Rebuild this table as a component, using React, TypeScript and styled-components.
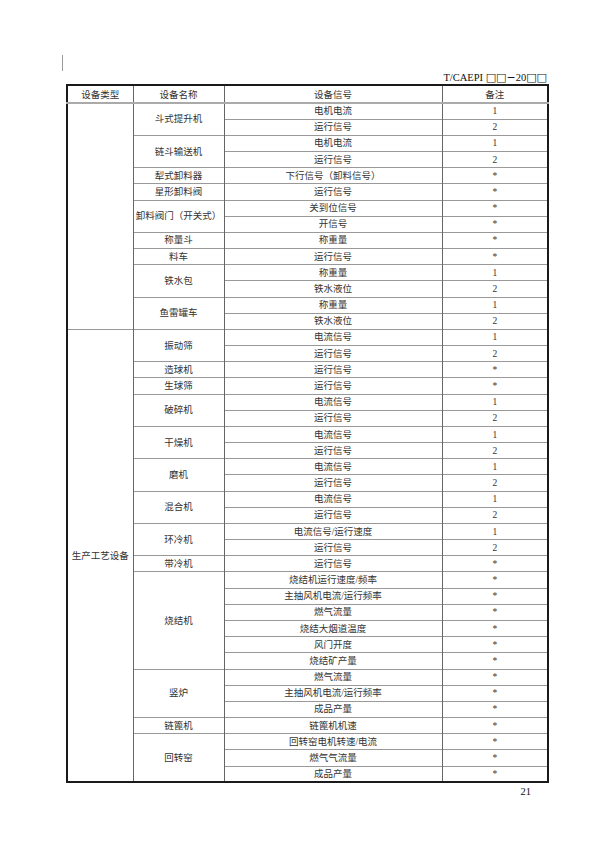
import React from 'react'
import styled, { createGlobalStyle } from 'styled-components';

type Signal = { name: string, note: string }
type Device = { name: string, signals: Signal[] }
type Group = { type: string, devices: Device[] }

const s = (name: string, note: string): Signal => ({ name, note })

const groups: Group[] = [
    {
        type: '',
        devices: [
            { name: '斗式提升机', signals: [s('电机电流', '1'), s('运行信号', '2')] },
            { name: '链斗输送机', signals: [s('电机电流', '1'), s('运行信号', '2')] },
            { name: '犁式卸料器', signals: [s('下行信号（卸料信号）', '*')] },
            { name: '星形卸料阀', signals: [s('运行信号', '*')] },
            { name: '卸料阀门（开关式）', signals: [s('关到位信号', '*'), s('开信号', '*')] },
            { name: '称量斗', signals: [s('称重量', '*')] },
            { name: '料车', signals: [s('运行信号', '*')] },
            { name: '铁水包', signals: [s('称重量', '1'), s('铁水液位', '2')] },
            { name: '鱼雷罐车', signals: [s('称重量', '1'), s('铁水液位', '2')] },
        ]
    },
    {
        type: '生产工艺设备',
        devices: [
            { name: '振动筛', signals: [s('电流信号', '1'), s('运行信号', '2')] },
            { name: '造球机', signals: [s('运行信号', '*')] },
            { name: '生球筛', signals: [s('运行信号', '*')] },
            { name: '破碎机', signals: [s('电流信号', '1'), s('运行信号', '2')] },
            { name: '干燥机', signals: [s('电流信号', '1'), s('运行信号', '2')] },
            { name: '磨机', signals: [s('电流信号', '1'), s('运行信号', '2')] },
            { name: '混合机', signals: [s('电流信号', '1'), s('运行信号', '2')] },
            { name: '环冷机', signals: [s('电流信号/运行速度', '1'), s('运行信号', '2')] },
            { name: '带冷机', signals: [s('运行信号', '*')] },
            {
                name: '烧结机', signals: [
                    s('烧结机运行速度/频率', '*'),
                    s('主抽风机电流/运行频率', '*'),
                    s('燃气流量', '*'),
                    s('烧结大烟道温度', '*'),
                    s('风门开度', '*'),
                    s('烧结矿产量', '*'),
                ]
            },
            { name: '竖炉', signals: [s('燃气流量', '*'), s('主抽风机电流/运行频率', '*'), s('成品产量', '*')] },
            { name: '链篦机', signals: [s('链篦机机速', '*')] },
            { name: '回转窑', signals: [s('回转窑电机转速/电流', '*'), s('燃气气流量', '*'), s('成品产量', '*')] },
        ]
    },
]

const App: React.FC = () => {
    return (
        <Page>
            <GlobalStyle />
            <CropMark />
            <DocCode>T/CAEPI <Glyph>□□−</Glyph>20<Glyph>□□</Glyph></DocCode>
            <Table>
                <colgroup>
                    <col style={{ width: 66 }} />
                    <col style={{ width: 91 }} />
                    <col style={{ width: 218 }} />
                    <col style={{ width: 106 }} />
                </colgroup>
                <thead>
                    <tr>
                        <Th>设备类型</Th>
                        <Th>设备名称</Th>
                        <Th>设备信号</Th>
                        <Th>备注</Th>
                    </tr>
                </thead>
                <tbody>
                    {groups.map((group, gi) => {
                        const groupSpan = group.devices.reduce((n, d) => n + d.signals.length, 0)
                        return group.devices.map((device, di) =>
                            device.signals.map((signal, si) => (
                                <tr key={`${gi}-${di}-${si}`}>
                                    {di === 0 && si === 0 && (
                                        <Td rowSpan={groupSpan}>{group.type}</Td>
                                    )}
                                    {si === 0 && (
                                        <NameCell rowSpan={device.signals.length}>{device.name}</NameCell>
                                    )}
                                    <Td>{signal.name}</Td>
                                    <Td>{signal.note}</Td>
                                </tr>
                            ))
                        )
                    })}
                </tbody>
            </Table>
            <PageNumber>21</PageNumber>
        </Page>
    )
}

export default App

const GlobalStyle = createGlobalStyle`
    html, body {
        margin: 0;
        padding: 0;
        background: #fff;
    }
    body {
        font-family: "Liberation Serif", "Noto Sans CJK SC", serif;
        color: #222;
    }
`;

const Page = styled.div`
    width: 600px;
    height: 848px;
    box-sizing: border-box;
    padding-top: 55px;
    background: #fff;
`;

const CropMark = styled.div`
    margin-left: 62px;
    width: 1px;
    height: 16px;
    background: #999;
`;

const DocCode = styled.div`
    height: 13px;
    line-height: 13px;
    padding-right: 53px;
    text-align: right;
    font-size: 10.5px;
    color: #111;
`;

const Glyph = styled.span`
    font-family: "DejaVu Sans", sans-serif;
    font-size: 11px;
`;

const Table = styled.table`
    margin-left: 66px;
    width: 481px;
    table-layout: fixed;
    border-collapse: collapse;
    border: 2px solid #1a1a1a;
    font-size: 9.5px;
    tr {
        height: 16.18px;
    }
`;

const Th = styled.th`
    font-weight: normal;
    padding: 0;
    height: 16px;
    text-align: center;
    vertical-align: middle;
    border-left: 1px solid #666;
    border-bottom: 2px solid #aaa;
    color: #333;
`;

const Td = styled.td`
    padding: 0;
    text-align: center;
    vertical-align: middle;
    border-left: 1px solid #666;
    border-top: 1px solid #999;
    color: #333;
    white-space: nowrap;
    line-height: 12px;
`;

const NameCell = styled(Td)`
    white-space: normal;
`;

const PageNumber = styled.div`
    margin-top: 3px;
    padding-right: 69px;
    text-align: right;
    font-size: 10.5px;
    color: #111;
`;
